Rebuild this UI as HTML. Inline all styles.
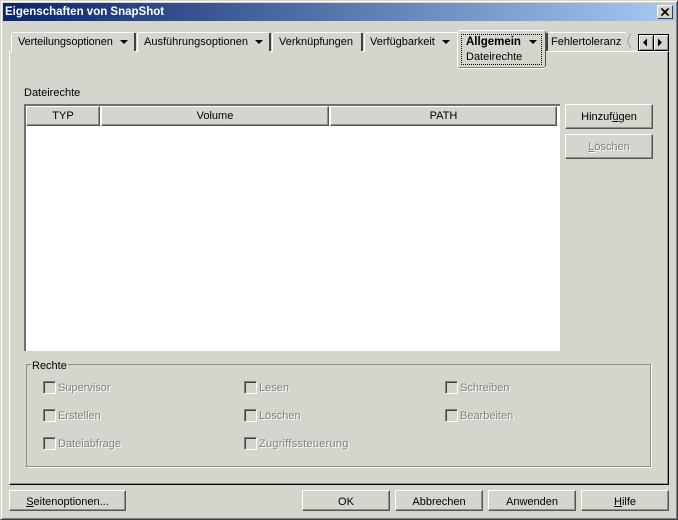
<!DOCTYPE html>
<html><head><meta charset="utf-8"><style>
html,body{margin:0;padding:0}
body{width:678px;height:520px;overflow:hidden;position:relative;background:#d5d4cd;font:11px/13px "Liberation Sans",sans-serif;color:#000}
div{position:absolute;box-sizing:border-box}
.t{white-space:nowrap}
.btn{background:#d5d4cd;border:1px solid;border-color:#fff #555 #555 #fff;box-shadow:inset -1px -1px 0 #909090;text-align:center;line-height:22px}
.hd{background:#d5d4cd;border:1px solid;border-color:#fff #555 #555 #fff;box-shadow:inset -1px -1px 0 #909090;text-align:center;line-height:18px;height:20px;top:106px}
.tab{border-top:1px solid #fff;border-left:1px solid #fff;border-top-left-radius:3px;height:20px;background:#d5d4cd}
.sep{width:2px;background:#404040;top:33px;height:18px}
.ar{width:0;height:0;border:4px solid transparent;border-top-color:#000;border-bottom:0}
.cb{width:13px;height:13px;border:1px solid;border-color:#808080 #fff #fff #808080;box-shadow:inset 1px 1px 0 #404040}
.dis{color:#808080;text-shadow:1px 1px 0 #fff}
u{text-decoration:underline}
</style></head><body>
<div style="left:0;top:0;width:678px;height:520px;border:1px solid;border-color:#d5d4cd #404040 #404040 #d5d4cd;box-shadow:inset 1px 1px 0 #fff,inset -1px -1px 0 #808080"></div>
<div style="left:3px;top:3px;width:672px;height:18px;background:linear-gradient(90deg,#0a246a,#a6caf0)"></div>
<div class="t" style="left:5px;top:6px;color:#fff;font-weight:bold;font-size:11.5px">Eigenschaften von SnapShot</div>
<div style="left:657px;top:5px;width:16px;height:14px;background:#d5d4cd;border:1px solid;border-color:#fff #404040 #404040 #fff">
<svg width="14" height="12" style="position:absolute;left:0;top:0"><path d="M3 2.5L10 9.5M4 2.5L11 9.5M10 2.5L3 9.5M11 2.5L4 9.5" stroke="#000" stroke-width="1"/></svg></div>

<!-- panel -->
<div style="left:9px;top:51px;width:660px;height:434px;border:1px solid;border-color:#fff #000 #000 #fff;box-shadow:inset -1px -1px 0 #909090"></div>

<!-- tabs -->
<div class="tab" style="left:11px;top:32px;width:124px"></div>
<div class="sep" style="left:134px"></div>
<div class="t" style="left:18px;top:36px;letter-spacing:-.1px">Verteilungsoptionen</div>
<div class="ar" style="left:120px;top:40px"></div>
<div class="tab" style="left:137px;top:32px;width:133px"></div>
<div class="sep" style="left:269px"></div>
<div class="t" style="left:144px;top:36px">Ausführungsoptionen</div>
<div class="ar" style="left:255px;top:40px"></div>
<div class="tab" style="left:272px;top:32px;width:90px"></div>
<div class="sep" style="left:361px"></div>
<div class="t" style="left:279px;top:36px">Verknüpfungen</div>
<div class="tab" style="left:364px;top:32px;width:93px"></div>
<div class="t" style="left:370px;top:36px">Verfügbarkeit</div>
<div class="ar" style="left:442px;top:40px"></div>

<div style="left:457px;top:30px;width:89px;height:38px;background:#d5d4cd;border:1px solid;border-color:#fff #555 #808080 #fff;border-radius:3px;box-shadow:0 1px 0 #fff"></div>
<div style="left:461px;top:34px;width:81px;height:31px;border:1px dotted #000"></div>
<div class="t" style="left:466px;top:36px;font-weight:bold;font-size:11.5px">Allgemein</div>
<div class="ar" style="left:529px;top:40px"></div>
<div class="t" style="left:466px;top:51px">Dateirechte</div>

<div style="left:546px;top:33px;width:2px;height:18px;background:#404040"></div>
<div style="left:548px;top:32px;width:78px;height:1px;background:#fff"></div>
<div style="left:548px;top:51px;width:90px;height:1px;background:#fff"></div>
<div class="t" style="left:551px;top:36px">Fehlertoleranz</div>
<svg width="8" height="20" style="position:absolute;left:626px;top:33px"><path d="M4.5 .5L1.5 8L4.5 15.5" fill="none" stroke="#a0a0a0"/></svg>

<div style="left:638px;top:34px;width:31px;height:17px;background:#000"></div>
<div style="left:639px;top:35px;width:14px;height:15px;background:#d5d4cd;border-top:1px solid #fff;border-left:1px solid #fff;box-shadow:inset -1px -1px 0 #909090"></div>
<div style="left:654px;top:35px;width:14px;height:15px;background:#d5d4cd;border-top:1px solid #fff;border-left:1px solid #fff;box-shadow:inset -1px -1px 0 #909090"></div>
<svg width="31" height="17" style="position:absolute;left:638px;top:34px"><path d="M5 8.5L9 4.5V12.5Z M24 8.5L20 4.5V12.5Z" fill="#000"/></svg>

<div class="t" style="left:24px;top:87px">Dateirechte</div>

<!-- table -->
<div style="left:24px;top:104px;width:536px;height:247px;background:#fff;border-top:2px solid #707070;border-left:2px solid #707070"></div>
<div class="hd" style="left:26px;width:74px">TYP</div>
<div class="hd" style="left:101px;width:228px">Volume</div>
<div class="hd" style="left:330px;width:227px">PATH</div>

<div class="btn" style="left:565px;top:104px;width:88px;height:25px;line-height:25px">Hinzuf<u>ü</u>gen</div>
<div class="btn dis" style="left:565px;top:134px;width:88px;height:25px;line-height:24px"><u>L</u>öschen</div>

<!-- group -->
<div style="left:26px;top:364px;width:625px;height:103px;border:1px solid #8c8c8c;box-shadow:1px 1px 0 #fff"></div>
<div class="t" style="left:31px;top:360px;padding:0 1px;background:#d5d4cd">Rechte</div>

<div class="cb" style="left:43px;top:381px"></div><div class="t dis" style="left:58px;top:382px">Supervisor</div>
<div class="cb" style="left:43px;top:409px"></div><div class="t dis" style="left:58px;top:410px">Erstellen</div>
<div class="cb" style="left:43px;top:437px"></div><div class="t dis" style="left:58px;top:438px">Dateiabfrage</div>
<div class="cb" style="left:244px;top:381px"></div><div class="t dis" style="left:259px;top:382px">Lesen</div>
<div class="cb" style="left:244px;top:409px"></div><div class="t dis" style="left:259px;top:410px">Löschen</div>
<div class="cb" style="left:244px;top:437px"></div><div class="t dis" style="left:259px;top:438px;letter-spacing:.25px">Zugriffssteuerung</div>
<div class="cb" style="left:445px;top:381px"></div><div class="t dis" style="left:460px;top:382px">Schreiben</div>
<div class="cb" style="left:445px;top:409px"></div><div class="t dis" style="left:460px;top:410px">Bearbeiten</div>

<!-- bottom -->
<div class="btn" style="left:9px;top:490px;width:117px;height:21px"><u>S</u>eitenoptionen...</div>
<div class="btn" style="left:302px;top:490px;width:88px;height:21px">OK</div>
<div class="btn" style="left:395px;top:490px;width:88px;height:21px">Abbrechen</div>
<div class="btn" style="left:488px;top:490px;width:88px;height:21px">Anwenden</div>
<div class="btn" style="left:581px;top:490px;width:88px;height:21px"><u>H</u>ilfe</div>
</body></html>
